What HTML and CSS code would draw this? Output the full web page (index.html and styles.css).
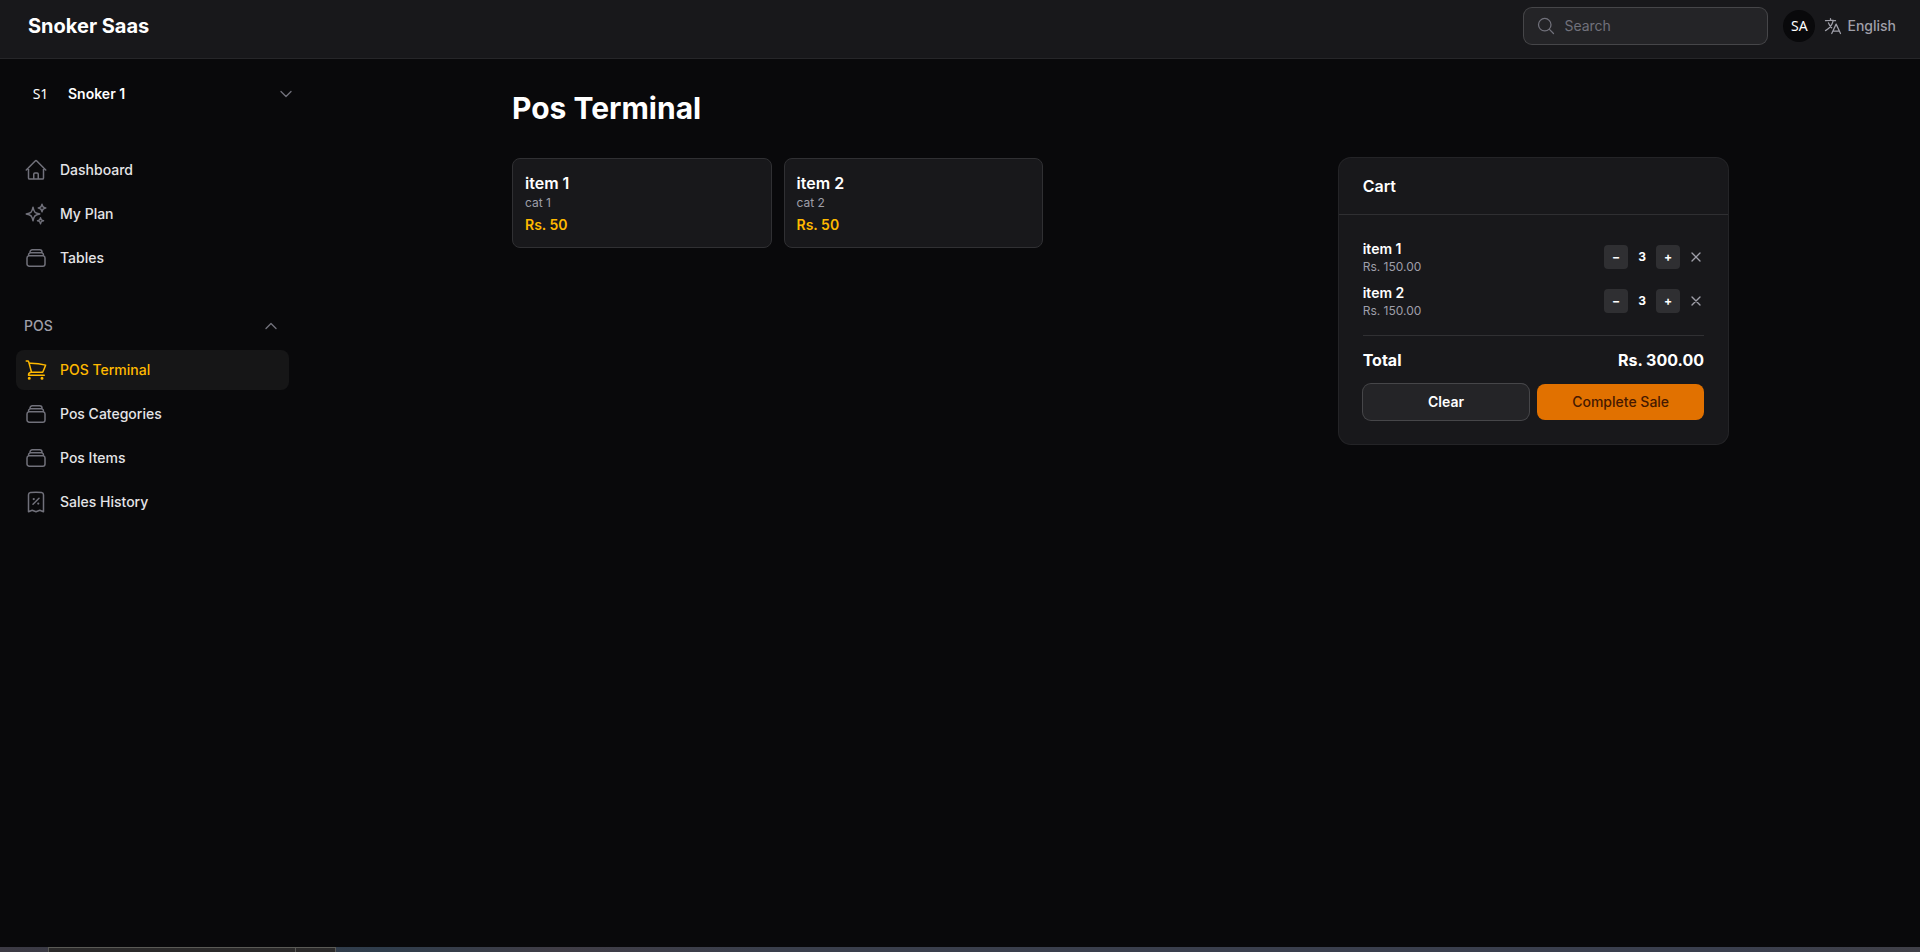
FILE: index.html
```html
<!DOCTYPE html>
<html lang="en">
<head>
	<meta charset="utf-8">
	<meta name="viewport" content="width=device-width, initial-scale=1">
	<title>Pos Terminal - Snoker Saas</title>
	<link rel="stylesheet" href="styles.css">
</head>
<body>
	<svg class="sprite" aria-hidden="true">
		<symbol id="stack" viewBox="0 0 24 24"><path d="M6 6.878V6a2.25 2.25 0 0 1 2.25-2.25h7.5A2.25 2.25 0 0 1 18 6v.878m-12 0c.235-.083.487-.128.75-.128h10.5c.263 0 .515.045.75.128m-12 0A2.25 2.25 0 0 0 4.5 9v.878m13.5-3A2.25 2.25 0 0 1 19.5 9v.878m0 0a2.246 2.246 0 0 0-.75-.128H5.25c-.263 0-.515.045-.75.128m15 0A2.25 2.25 0 0 1 21 12v6a2.25 2.25 0 0 1-2.25 2.25H5.25A2.25 2.25 0 0 1 3 18v-6c0-.98.626-1.813 1.5-2.122"/></symbol>
		<symbol id="x" viewBox="0 0 24 24"><path d="M6 18 18 6M6 6l12 12"/></symbol>
	</svg>

	<header class="topbar">
		<a class="brand" href="#">Snoker Saas</a>
		<div class="topbar-end">
			<label class="search">
				<svg class="icon" viewBox="0 0 24 24"><path d="m21 21-5.197-5.197m0 0A7.5 7.5 0 1 0 5.196 5.196a7.5 7.5 0 0 0 10.607 10.607Z"/></svg>
				<input type="search" placeholder="Search" aria-label="Search">
			</label>
			<button class="avatar" type="button">SA</button>
			<button class="language" type="button">
				<svg class="icon" viewBox="0 0 24 24"><path d="m10.5 21 5.25-11.25L21 21m-9-3h7.5M3 5.621a48.474 48.474 0 0 1 6-.371m0 0c1.12 0 2.233.038 3.334.114M9 5.25V3m3.334 2.364C11.176 10.658 7.69 15.08 3 17.502m9.334-12.138c.896.061 1.785.147 2.666.257m-4.589 8.495a18.023 18.023 0 0 1-3.827-5.802"/></svg>
				English
			</button>
		</div>
	</header>

	<div class="layout">
		<aside class="sidebar">
			<button class="tenant" type="button">
				<span class="initials">S1</span>
				<span class="tenant-name">Snoker 1</span>
				<svg class="icon icon-sm" viewBox="0 0 24 24"><path d="m19.5 8.25-7.5 7.5-7.5-7.5"/></svg>
			</button>

			<nav class="nav">
				<a class="nav-item" href="#">
					<svg class="icon" viewBox="0 0 24 24"><path d="m2.25 12 8.954-8.955c.44-.439 1.152-.439 1.591 0L21.75 12M4.5 9.75v10.125c0 .621.504 1.125 1.125 1.125H9.75v-4.875c0-.621.504-1.125 1.125-1.125h2.25c.621 0 1.125.504 1.125 1.125V21h4.125c.621 0 1.125-.504 1.125-1.125V9.75M8.25 21h8.25"/></svg>
					Dashboard
				</a>
				<a class="nav-item" href="#">
					<svg class="icon" viewBox="0 0 24 24"><path d="M9.813 15.904 9 18.75l-.813-2.846a4.5 4.5 0 0 0-3.09-3.09L2.25 12l2.846-.813a4.5 4.5 0 0 0 3.09-3.09L9 5.25l.813 2.846a4.5 4.5 0 0 0 3.09 3.09L15.75 12l-2.846.813a4.5 4.5 0 0 0-3.09 3.09ZM18.259 8.715 18 9.75l-.259-1.035a3.375 3.375 0 0 0-2.455-2.456L14.25 6l1.036-.259a3.375 3.375 0 0 0 2.455-2.456L18 2.25l.259 1.035a3.375 3.375 0 0 0 2.456 2.456L21.75 6l-1.035.259a3.375 3.375 0 0 0-2.456 2.456ZM16.894 20.567 16.5 21.75l-.394-1.183a2.25 2.25 0 0 0-1.423-1.423L13.5 18.75l1.183-.394a2.25 2.25 0 0 0 1.423-1.423l.394-1.183.394 1.183a2.25 2.25 0 0 0 1.423 1.423l1.183.394-1.183.394a2.25 2.25 0 0 0-1.423 1.423Z"/></svg>
					My Plan
				</a>
				<a class="nav-item" href="#"><svg class="icon"><use href="#stack"/></svg>Tables</a>
			</nav>

			<nav class="nav">
				<button class="nav-group" type="button">
					POS
					<svg class="icon icon-sm" viewBox="0 0 24 24"><path d="m4.5 15.75 7.5-7.5 7.5 7.5"/></svg>
				</button>
				<a class="nav-item active" href="#">
					<svg class="icon" viewBox="0 0 24 24"><path d="M2.25 3h1.386c.51 0 .955.343 1.087.835l.383 1.437M7.5 14.25a3 3 0 0 0-3 3h15.75m-12.75-3h11.218c1.121-2.3 2.1-4.684 2.924-7.138a60.114 60.114 0 0 0-16.536-1.84M7.5 14.25 5.106 5.272M6 20.25a.75.75 0 1 1-1.5 0 .75.75 0 0 1 1.5 0Zm12.75 0a.75.75 0 1 1-1.5 0 .75.75 0 0 1 1.5 0Z"/></svg>
					POS Terminal
				</a>
				<a class="nav-item" href="#"><svg class="icon"><use href="#stack"/></svg>Pos Categories</a>
				<a class="nav-item" href="#"><svg class="icon"><use href="#stack"/></svg>Pos Items</a>
				<a class="nav-item" href="#">
					<svg class="icon" viewBox="0 0 24 24"><path d="m9 14.25 6-6m4.5-3.493V21.75l-3.75-1.5-3.75 1.5-3.75-1.5-3.75 1.5V4.757c0-1.108.806-2.057 1.907-2.185a48.507 48.507 0 0 1 11.186 0c1.1.128 1.907 1.077 1.907 2.185ZM9.75 9h.008v.008H9.75V9Zm.375 0a.375.375 0 1 1-.75 0 .375.375 0 0 1 .75 0Zm4.125 4.5h.008v.008h-.008V13.5Zm.375 0a.375.375 0 1 1-.75 0 .375.375 0 0 1 .75 0Z"/></svg>
					Sales History
				</a>
			</nav>
		</aside>

		<main class="main">
			<h1>Pos Terminal</h1>
			<div class="terminal">
				<div class="products">
					<button class="product" type="button">
						<span class="product-name">item 1</span>
						<span class="muted">cat 1</span>
						<span class="price">Rs. 50</span>
					</button>
					<button class="product" type="button">
						<span class="product-name">item 2</span>
						<span class="muted">cat 2</span>
						<span class="price">Rs. 50</span>
					</button>
				</div>

				<section class="cart">
					<h2>Cart</h2>
					<div class="cart-body">
						<ul class="lines">
							<li class="line">
								<div class="line-info">
									<span class="line-name">item 1</span>
									<span class="muted">Rs. 150.00</span>
								</div>
								<div class="qty">
									<button class="step" type="button">−</button>
									<span class="count">3</span>
									<button class="step" type="button">+</button>
								</div>
								<button class="remove" type="button" aria-label="Remove"><svg class="icon icon-sm"><use href="#x"/></svg></button>
							</li>
							<li class="line">
								<div class="line-info">
									<span class="line-name">item 2</span>
									<span class="muted">Rs. 150.00</span>
								</div>
								<div class="qty">
									<button class="step" type="button">−</button>
									<span class="count">3</span>
									<button class="step" type="button">+</button>
								</div>
								<button class="remove" type="button" aria-label="Remove"><svg class="icon icon-sm"><use href="#x"/></svg></button>
							</li>
						</ul>
						<div class="total">
							<span>Total</span>
							<span>Rs. 300.00</span>
						</div>
						<div class="actions">
							<button class="btn" type="button">Clear</button>
							<button class="btn btn-primary" type="button">Complete Sale</button>
						</div>
					</div>
				</section>
			</div>
		</main>
	</div>

	<footer class="taskbar">
		<div class="task"></div>
		<div class="task task-small"></div>
	</footer>
</body>
</html>
```

FILE: styles.css
```css
* {
	box-sizing: border-box;
}
body {
	margin: 0;
	min-height: 100vh;
	display: flex;
	flex-direction: column;
	background-color: #09090b;
	color: #ffffff;
	font-family: Inter, "Liberation Sans", sans-serif;
	font-size: 14px;
	line-height: 20px;
}
button {
	padding: 0;
	border: 0;
	background: none;
	color: inherit;
	font: inherit;
	cursor: pointer;
}
a {
	color: inherit;
	text-decoration: none;
}
h1, h2, ul {
	margin: 0;
	padding: 0;
}
.sprite {
	display: none;
}
.icon {
	width: 24px;
	height: 24px;
	flex: none;
	fill: none;
	stroke: #71717b;
	stroke-width: 1.5;
	stroke-linecap: round;
	stroke-linejoin: round;
}
.icon-sm {
	width: 16px;
	height: 16px;
	stroke-width: 2;
}

/* top bar */
.topbar {
	display: flex;
	align-items: center;
	justify-content: space-between;
	padding: 8px 24px 14px 28px;
	background-color: #18181b;
	border-bottom: 1px solid #262629;
}
.brand {
	font-size: 20px;
	font-weight: 700;
}
.topbar-end {
	display: flex;
	align-items: center;
	gap: 16px;
}
.search {
	display: flex;
	align-items: center;
	gap: 8px;
	width: 243px;
	height: 36px;
	padding: 0 12px;
	border-radius: 8px;
	background-color: #242427;
	box-shadow: 0 0 0 1px #464649;
}
.search .icon {
	width: 20px;
	height: 20px;
}
.search input {
	flex: 1;
	min-width: 0;
	padding: 0;
	border: 0;
	outline: 0;
	background: none;
	color: #ffffff;
	font: inherit;
}
.search input::placeholder {
	color: #71717b;
}
.avatar {
	width: 32px;
	height: 32px;
	border-radius: 50%;
	background-color: #09090b;
	font-family: "Noto Sans", sans-serif;
}
.language {
	display: flex;
	align-items: center;
	gap: 4px;
	margin-left: -8px;
	color: #9f9fa9;
	font-weight: 500;
}
.language .icon {
	width: 20px;
	height: 20px;
	stroke: #9f9fa9;
}

/* sidebar */
.layout {
	display: flex;
	flex: 1;
}
.sidebar {
	display: flex;
	flex-direction: column;
	gap: 28px;
	width: 320px;
	padding: 19px 31px 24px 16px;
}
.tenant {
	display: flex;
	align-items: center;
	gap: 10px;
	height: 32px;
	margin: 0 -13px 12px 7px;
	text-align: left;
	font-weight: 600;
}
.tenant .icon {
	margin-right: 8px;
}
.initials {
	width: 35px;
	text-align: center;
	font-family: "Noto Sans", sans-serif;
	font-weight: 400;
}
.tenant-name {
	flex: 1;
}
.nav {
	display: flex;
	flex-direction: column;
	gap: 4px;
}
.nav-item {
	display: flex;
	align-items: center;
	gap: 12px;
	padding: 10px 8px;
	border-radius: 8px;
	color: #e4e4e7;
	font-weight: 500;
}
.nav-item .icon {
	margin: -2px 0;
}
.nav-group {
	display: flex;
	align-items: center;
	justify-content: space-between;
	padding: 10px 10px 10px 8px;
	color: #9f9fa9;
	font-weight: 500;
}
.active {
	background-color: #161617;
	color: #ffb900;
}
.active .icon {
	stroke: #ffb900;
}

/* content */
.main {
	flex: 1;
	max-width: 1280px;
	margin: 0 auto;
	padding: 31px 32px;
}
h1 {
	margin-bottom: 32px;
	font-size: 30px;
	font-weight: 700;
	line-height: 36px;
}
.terminal {
	display: grid;
	grid-template-columns: repeat(3, 1fr);
	align-items: start;
	gap: 24px;
}
.products {
	grid-column: span 2;
	display: grid;
	grid-template-columns: repeat(3, 1fr);
	gap: 12px;
}
.product {
	display: flex;
	flex-direction: column;
	padding: 12px;
	border: 1px solid #303033;
	border-radius: 8px;
	background-color: #18181b;
	text-align: left;
}
.product-name {
	font-size: 16px;
	font-weight: 600;
	line-height: 24px;
}
.muted {
	color: #9f9fa9;
	font-size: 12px;
	line-height: 16px;
}
.price {
	margin-top: 4px;
	color: #ffb900;
	font-weight: 600;
}

/* cart */
.cart {
	border-radius: 12px;
	background-color: #18181b;
	box-shadow: 0 0 0 1px #242427;
}
h2 {
	padding: 16px 24px;
	border-bottom: 1px solid #2f2f32;
	font-size: 16px;
	font-weight: 600;
	line-height: 24px;
}
.cart-body {
	padding: 24px;
}
.lines {
	display: flex;
	flex-direction: column;
	gap: 8px;
	padding-bottom: 16px;
	border-bottom: 1px solid #303033;
	list-style: none;
}
.line {
	display: flex;
	align-items: center;
	gap: 8px;
}
.line-info {
	display: flex;
	flex: 1;
	flex-direction: column;
}
.line-name {
	font-weight: 600;
}
.qty {
	display: flex;
	align-items: center;
	gap: 4px;
	font-size: 12px;
	font-weight: 700;
}
.step {
	width: 24px;
	height: 24px;
	border-radius: 4px;
	background-color: #2f2f32;
}
.count {
	width: 20px;
	text-align: center;
}
.remove {
	display: flex;
}
.remove .icon {
	stroke: #9f9fa9;
}
.total {
	display: flex;
	justify-content: space-between;
	padding: 12px 0;
	font-size: 16px;
	font-weight: 700;
	line-height: 24px;
}
.actions {
	display: grid;
	grid-template-columns: 1fr 1fr;
	gap: 8px;
}
.btn {
	height: 36px;
	border-radius: 8px;
	background-color: #242427;
	box-shadow: 0 0 0 1px #464649;
	font-weight: 600;
}
.btn-primary {
	background-color: #e17100;
	box-shadow: none;
	color: #461901;
	font-weight: 500;
}

/* strip along the bottom edge */
.taskbar {
	display: flex;
	height: 5px;
	padding-left: 48px;
	background: linear-gradient(to right, #3c3a44, #2f3d4c 20%, #403d46 29%, #3a3f4c 40%, #3a3f4e 90%, #404048);
}
.task {
	width: 248px;
	border: 1px solid #5a5a56;
	border-bottom: 0;
	background-color: #2b2a2a;
}
.task-small {
	width: 40px;
	border-left: 0;
}
```
